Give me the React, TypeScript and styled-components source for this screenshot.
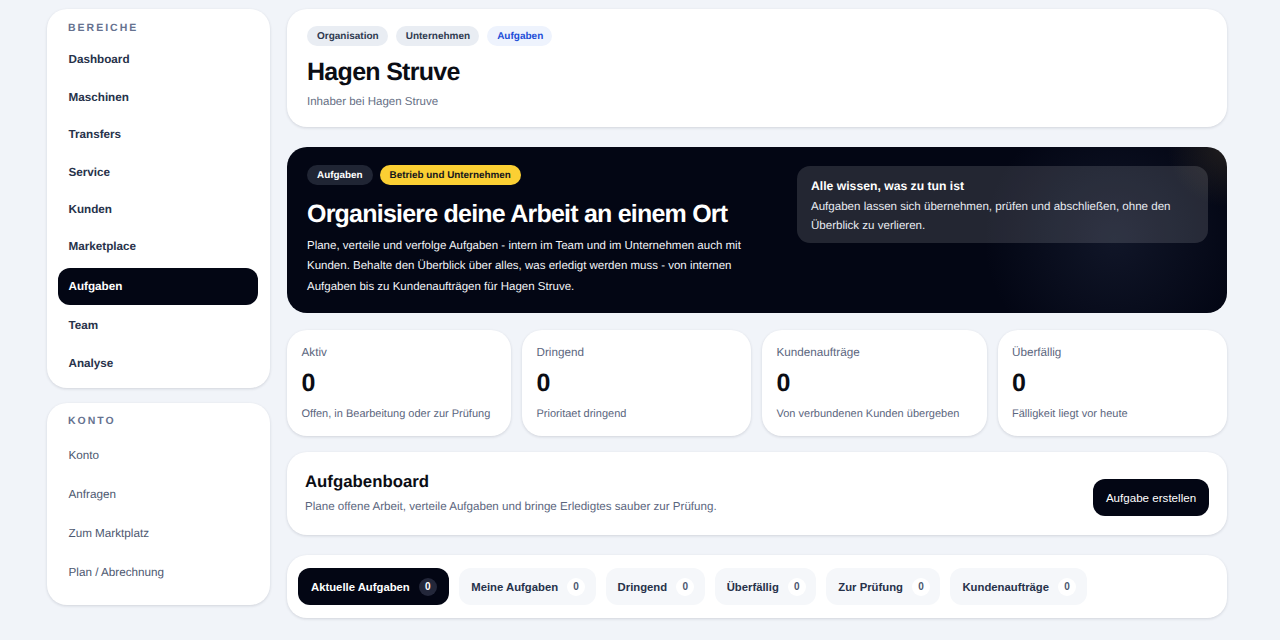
import React from 'react'
import styled, { createGlobalStyle } from 'styled-components'

const GlobalStyle = createGlobalStyle`
  html, body {
    margin: 0;
    padding: 0;
    height: 640px;
    overflow: hidden;
    background: #f1f4f9;
    font-family: 'Liberation Sans', Arial, sans-serif;
    text-rendering: geometricPrecision;
  }
  * {
    box-sizing: border-box;
  }
`

const Page = styled.div`
  display: grid;
  grid-template-columns: 223px 940px;
  column-gap: 17px;
  align-items: start;
  padding: 9px 0 0 47px;
  height: 640px;
`

const Sidebar = styled.aside`
  display: flex;
  flex-direction: column;
  gap: 15px;
`

const Card = styled.section`
  background: #fff;
  border-radius: 20px;
  box-shadow: 0 1px 3px rgba(15, 23, 42, 0.14);
`

const NavCard = styled(Card)<{ $height: number; $top: number }>`
  height: ${p => p.$height}px;
  padding: ${p => p.$top}px 12px 0 11px;
`

const NavHeading = styled.div`
  height: 15px;
  padding-left: 10px;
  font-size: 10.5px;
  line-height: 15px;
  font-weight: 700;
  letter-spacing: 2px;
  color: #667290;
`

const NavList = styled.nav<{ $gap: number; $top: number }>`
  display: flex;
  flex-direction: column;
  gap: ${p => p.$gap}px;
  margin-top: ${p => p.$top}px;
`

const NavItem = styled.a<{ $active?: boolean; $muted?: boolean }>`
  display: flex;
  align-items: center;
  height: 37px;
  padding-left: 10.5px;
  border-radius: 12px;
  font-size: 11.7px;
  font-weight: ${p => (p.$muted ? 400 : 700)};
  color: ${p => (p.$active ? '#fff' : p.$muted ? '#4d5870' : '#27324a')};
  background: ${p => (p.$active ? '#030614' : 'transparent')};
  margin: ${p => (p.$active ? '2px 0' : '0')};
`

const Main = styled.main`
  display: flex;
  flex-direction: column;
`

const HeaderCard = styled(Card)`
  height: 118px;
  padding: 17px 20px 0;
`

const Crumbs = styled.div`
  display: flex;
  gap: 8px;
`

const Crumb = styled.span<{ $current?: boolean }>`
  display: inline-flex;
  align-items: center;
  height: 20px;
  padding: 0 9px 0 10px;
  border-radius: 10px;
  font-size: 10px;
  font-weight: 700;
  color: ${p => (p.$current ? '#1d4ed8' : '#2f3a50')};
  background: ${p => (p.$current ? '#eef3fd' : '#e9edf3')};
`

const PageTitle = styled.h1`
  margin: 9px 0 0;
  font-size: 25px;
  line-height: 34px;
  font-weight: 700;
  letter-spacing: -0.7px;
  color: #0b0d14;
`

const PageSub = styled.p`
  margin: 5px 0 0;
  font-size: 11.5px;
  line-height: 16px;
  color: #667085;
`

const Hero = styled.section`
  display: grid;
  grid-template-columns: 1fr 411px;
  column-gap: 33px;
  height: 166px;
  margin-top: 20px;
  padding: 18px 19px 0 20px;
  border-radius: 20px;
  color: #fff;
  background:
    radial-gradient(circle at 100% 0%, rgba(120, 100, 60, 0.26), transparent 60px),
    radial-gradient(circle at 88% 55%, rgba(70, 85, 120, 0.2), transparent 130px),
    #030614;
`

const HeroTags = styled.div`
  display: flex;
  gap: 7px;
`

const HeroTag = styled.span<{ $accent?: boolean }>`
  display: inline-flex;
  align-items: center;
  height: 20px;
  padding: 0 10px;
  border-radius: 10px;
  font-size: 9.9px;
  font-weight: 700;
  color: ${p => (p.$accent ? '#14151c' : '#fff')};
  background: ${p => (p.$accent ? '#fbcf33' : '#202534')};
`

const HeroTitle = styled.h2`
  margin: 12px 0 0;
  font-size: 25px;
  line-height: 34px;
  font-weight: 700;
  letter-spacing: -0.78px;
`

const HeroText = styled.p`
  margin: 4.5px 0 0;
  font-size: 11.5px;
  line-height: 20.5px;
  color: #f2f4f8;
`

const Note = styled.div`
  align-self: start;
  height: 77px;
  margin-top: 1px;
  padding: 12px 14px 0;
  border-radius: 13px;
  background: rgba(255, 255, 255, 0.13);
`

const NoteTitle = styled.div`
  font-size: 12.2px;
  line-height: 16px;
  font-weight: 700;
`

const NoteText = styled.div`
  margin-top: 4px;
  font-size: 11.55px;
  line-height: 18.5px;
  color: #e8ebf1;
`

const Stats = styled.div`
  display: grid;
  grid-template-columns: 224px 229px 224.5px 229.5px;
  column-gap: 11px;
  margin-top: 17px;
`

const StatCard = styled(Card)`
  height: 106px;
  padding: 16px 14.5px 0;
`

const StatLabel = styled.div`
  font-size: 11.7px;
  line-height: 14px;
  color: #5b667e;
`

const StatValue = styled.div`
  margin-top: 8px;
  font-size: 25px;
  line-height: 30px;
  font-weight: 700;
  color: #0b0d14;
`

const StatHint = styled.div`
  margin-top: 9px;
  font-size: 11px;
  line-height: 14px;
  color: #5b667e;
`

const Board = styled(Card)`
  display: flex;
  align-items: center;
  justify-content: space-between;
  height: 83px;
  margin-top: 16px;
  padding: 0 18px;
`

const BoardCopy = styled.div`
  margin-bottom: 2px;
`

const BoardTitle = styled.h3`
  margin: 0;
  font-size: 16.8px;
  line-height: 22px;
  font-weight: 700;
  color: #0b0d14;
`

const BoardText = styled.p`
  margin: 6px 0 0;
  font-size: 11.6px;
  line-height: 16px;
  color: #5b667e;
`

const PrimaryButton = styled.button`
  align-self: flex-end;
  height: 37px;
  width: 116px;
  margin-bottom: 19px;
  border: 0;
  border-radius: 12px;
  font: 400 11.6px 'Liberation Sans', Arial, sans-serif;
  color: #fff;
  background: #030614;
`

const Tabs = styled(Card)`
  display: flex;
  align-items: center;
  gap: 10px;
  height: 63px;
  margin-top: 20px;
  padding: 0 11px;
`

const Tab = styled.button<{ $active?: boolean }>`
  display: flex;
  align-items: center;
  gap: 9px;
  height: 37px;
  padding: ${p => (p.$active ? '0 12.5px 0 13px' : '0 10.5px 0 12px')};
  border: 0;
  border-radius: 12px;
  font: 700 11.3px 'Liberation Sans', Arial, sans-serif;
  color: ${p => (p.$active ? '#fff' : '#27324a')};
  background: ${p => (p.$active ? '#030614' : '#f5f7fa')};
`

const TabCount = styled.span<{ $active?: boolean }>`
  display: flex;
  align-items: center;
  justify-content: center;
  width: 18px;
  height: 18px;
  border-radius: 50%;
  font-size: 10px;
  font-weight: 700;
  color: ${p => (p.$active ? '#fff' : '#4d5870')};
  background: ${p => (p.$active ? '#23273a' : '#fff')};
`

const primaryNav = ['Dashboard', 'Maschinen', 'Transfers', 'Service', 'Kunden', 'Marketplace', 'Aufgaben', 'Team', 'Analyse']
const accountNav = ['Konto', 'Anfragen', 'Zum Marktplatz', 'Plan / Abrechnung']

const stats = [
  { label: 'Aktiv', hint: 'Offen, in Bearbeitung oder zur Prüfung' },
  { label: 'Dringend', hint: 'Prioritaet dringend' },
  { label: 'Kundenaufträge', hint: 'Von verbundenen Kunden übergeben' },
  { label: 'Überfällig', hint: 'Fälligkeit liegt vor heute' }
]

const tabs = ['Aktuelle Aufgaben', 'Meine Aufgaben', 'Dringend', 'Überfällig', 'Zur Prüfung', 'Kundenaufträge']

const App = () => (
  <>
    <GlobalStyle />
    <Page>
      <Sidebar>
        <NavCard $height={379} $top={12}>
          <NavHeading>BEREICHE</NavHeading>
          <NavList $gap={0.4} $top={5.4}>
            {primaryNav.map(item => (
              <NavItem key={item} $active={item === 'Aufgaben'}>{item}</NavItem>
            ))}
          </NavList>
        </NavCard>
        <NavCard $height={202} $top={11}>
          <NavHeading>KONTO</NavHeading>
          <NavList $gap={2} $top={8}>
            {accountNav.map(item => (
              <NavItem key={item} $muted>{item}</NavItem>
            ))}
          </NavList>
        </NavCard>
      </Sidebar>
      <Main>
        <HeaderCard>
          <Crumbs>
            <Crumb>Organisation</Crumb>
            <Crumb>Unternehmen</Crumb>
            <Crumb $current>Aufgaben</Crumb>
          </Crumbs>
          <PageTitle>Hagen Struve</PageTitle>
          <PageSub>Inhaber bei Hagen Struve</PageSub>
        </HeaderCard>
        <Hero>
          <div>
            <HeroTags>
              <HeroTag>Aufgaben</HeroTag>
              <HeroTag $accent>Betrieb und Unternehmen</HeroTag>
            </HeroTags>
            <HeroTitle>Organisiere deine Arbeit an einem Ort</HeroTitle>
            <HeroText>
              Plane, verteile und verfolge Aufgaben - intern im Team und im Unternehmen auch mit
              Kunden. Behalte den Überblick über alles, was erledigt werden muss - von internen
              Aufgaben bis zu Kundenaufträgen für Hagen Struve.
            </HeroText>
          </div>
          <Note>
            <NoteTitle>Alle wissen, was zu tun ist</NoteTitle>
            <NoteText>
              Aufgaben lassen sich übernehmen, prüfen und abschließen, ohne den Überblick zu verlieren.
            </NoteText>
          </Note>
        </Hero>
        <Stats>
          {stats.map(stat => (
            <StatCard key={stat.label}>
              <StatLabel>{stat.label}</StatLabel>
              <StatValue>0</StatValue>
              <StatHint>{stat.hint}</StatHint>
            </StatCard>
          ))}
        </Stats>
        <Board>
          <BoardCopy>
            <BoardTitle>Aufgabenboard</BoardTitle>
            <BoardText>Plane offene Arbeit, verteile Aufgaben und bringe Erledigtes sauber zur Prüfung.</BoardText>
          </BoardCopy>
          <PrimaryButton>Aufgabe erstellen</PrimaryButton>
        </Board>
        <Tabs>
          {tabs.map((tab, i) => (
            <Tab key={tab} $active={i === 0}>
              {tab}
              <TabCount $active={i === 0}>0</TabCount>
            </Tab>
          ))}
        </Tabs>
      </Main>
    </Page>
  </>
)

export default App
